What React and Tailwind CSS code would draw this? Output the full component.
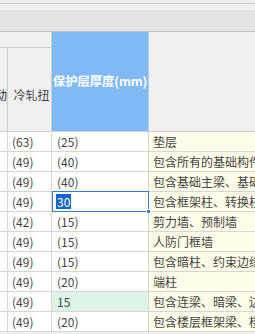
const rows = [
  { a: '(63)', b: '(25)', c: '垫层' },
  { a: '(49)', b: '(40)', c: '包含所有的基础构件' },
  { a: '(49)', b: '(40)', c: '包含基础主梁、基础次梁' },
  { a: '(49)', b: '30', c: '包含框架柱、转换柱', selected: true },
  { a: '(42)', b: '(15)', c: '剪力墙、预制墙' },
  { a: '(49)', b: '(15)', c: '人防门框墙' },
  { a: '(49)', b: '(15)', c: '包含暗柱、约束边缘构件' },
  { a: '(49)', b: '(20)', c: '端柱' },
  { a: '(49)', b: '15', c: '包含连梁、暗梁、边框梁', edited: true },
  { a: '(49)', b: '(20)', c: '包含楼层框架梁、楼层' },
];

export default function App() {
  return (
    <div
      className="w-[255px] h-[334px] overflow-hidden bg-[#f0f0f0] text-[12px] text-[#333]"
      style={{ fontFamily: '"Noto Sans CJK SC", "Noto Sans", sans-serif' }}
    >
      {/* toolbar strip */}
      <div className="h-[3px] bg-[#f0f0f0]" />
      <div className="h-px bg-[#c9c9c9]" />
      <div className="h-[6px] bg-[#f0f0f0]" />
      <div className="h-[22px] bg-[#e4e4e4] border-b border-[#c6c6c6]" />

      {/* header */}
      <div className="flex h-[100px] border-b border-[#cfcfcf]">
        <div className="w-[52px] shrink-0 flex flex-col border-r border-[#cfcfcf]">
          <div className="h-[16px] border-b border-[#cfcfcf]" />
          <div className="flex flex-1">
            <div className="w-[8px] shrink-0 border-r border-[#cfcfcf] overflow-hidden flex items-center justify-end pt-[10px]">
              <span className="whitespace-nowrap">动</span>
            </div>
            <div className="flex-1 flex items-center justify-center pt-[10px] pl-[4px] text-[#444]">冷轧扭</div>
          </div>
        </div>
        <div className="w-[97px] shrink-0 bg-[#80b9f6] border-r border-[#a9d0fa] flex items-center justify-center text-white font-bold whitespace-nowrap text-[12.5px] tracking-[-0.2px]">
          保护层厚度(mm)
        </div>
        <div className="flex-1" />
      </div>

      {/* body */}
      {rows.map((r, i) => (
        <div key={i} className="flex h-[20px] border-b border-[#d6d6d6] bg-white">
          <div className="w-[8px] shrink-0 border-r border-[#d6d6d6] bg-white" />
          <div className="w-[44px] shrink-0 border-r border-[#d6d6d6] flex items-center pl-[4px] text-[#444]">
            {r.a}
          </div>
          {r.selected ? (
            <div className="relative w-[97px] shrink-0 border-r border-[#d6d6d6] flex items-center pl-[4px]">
              <div className="absolute left-0 top-[-1px] right-[-1px] bottom-[-1px] border-[1.5px] border-[#3a7bd5]" />
              <span className="bg-[#1464c8] text-white px-[1px] leading-[15px]">{r.b}</span>
              <div className="absolute right-[-3px] bottom-[-3px] w-[5px] h-[5px] bg-[#3a7bd5] border border-white" />
            </div>
          ) : (
            <div
              className={`w-[97px] shrink-0 border-r border-[#d6d6d6] flex items-center pl-[5px] text-[#444] ${
                r.edited ? 'bg-[#dff4e9]' : ''
              }`}
            >
              {r.b}
            </div>
          )}
          <div className="flex-1 min-w-0 overflow-hidden bg-[#fffbe9] flex items-center pl-[4px] whitespace-nowrap text-[#444]">
            {r.c}
          </div>
        </div>
      ))}
    </div>
  );
}
